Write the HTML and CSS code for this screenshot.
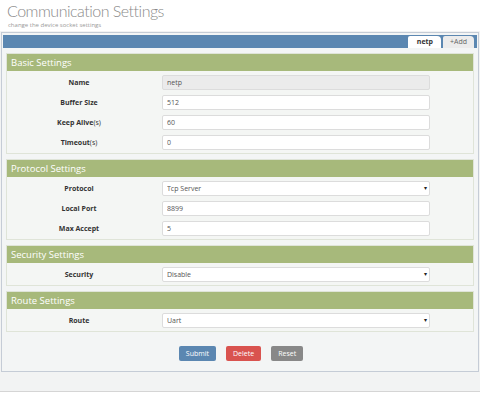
FILE: index.html
```html
<!DOCTYPE html>
<html lang="en">
<head>
  <meta charset="UTF-8">
  <title>Communication Settings</title>
  <link rel="stylesheet" href="styles.css">
</head>
<body>
  <div class="page-head">
    <h1>Communication Settings</h1>
    <p>change the device socket settings</p>
  </div>

  <div class="content">
    <div class="panel">
      <div class="tabbar">
        <span class="tab active">netp</span>
        <span class="tab">+Add</span>
      </div>
      <div class="panel-body">

        <div class="group">
          <div class="group-title">Basic Settings</div>
          <div class="group-body">
            <div class="row"><label><b>Name</b></label><input type="text" value="netp" disabled></div>
            <div class="row"><label><b>Buffer Size</b></label><input type="text" value="512"></div>
            <div class="row"><label><b>Keep Alive</b>(s)</label><input type="text" value="60"></div>
            <div class="row"><label><b>Timeout</b>(s)</label><input type="text" value="0"></div>
          </div>
        </div>

        <div class="group">
          <div class="group-title">Protocol Settings</div>
          <div class="group-body">
            <div class="row"><label><b>Protocol</b></label><div class="select"><select><option>Tcp Server</option></select></div></div>
            <div class="row"><label><b>Local Port</b></label><input type="text" value="8899"></div>
            <div class="row"><label><b>Max Accept</b></label><input type="text" value="5"></div>
          </div>
        </div>

        <div class="group">
          <div class="group-title">Security Settings</div>
          <div class="group-body">
            <div class="row"><label><b>Security</b></label><div class="select"><select><option>Disable</option></select></div></div>
          </div>
        </div>

        <div class="group">
          <div class="group-title">Route Settings</div>
          <div class="group-body">
            <div class="row"><label><b>Route</b></label><div class="select"><select><option>Uart</option></select></div></div>
          </div>
        </div>

        <div class="actions">
          <button class="btn btn-blue">Submit</button>
          <button class="btn btn-red">Delete</button>
          <button class="btn btn-gray">Reset</button>
        </div>
      </div>
    </div>
  </div>
</body>
</html>
```

FILE: styles.css
```css
body {
  margin: 0;
  background: #fff;
  font-family: "Open Sans", "Liberation Sans", sans-serif;
  color: #333;
}
.page-head {
  padding: 0 0 0 7px;
  height: 31px;
}
.page-head h1 {
  margin: 0;
  font-family: Lato, "Liberation Sans", sans-serif;
  font-size: 16px;
  font-weight: 300;
  letter-spacing: -0.5px;
  line-height: 21px;
  color: #8a8a8a;
}
.page-head p {
  margin: 0 0 0 1px;
  font-size: 6px;
  line-height: 8px;
  color: #999;
}
.content {
  background: #f2f3f3;
  height: 361px;
  border-bottom: 1px solid #d5d5d5;
  padding-top: 1px;
  box-sizing: border-box;
}
.panel {
  margin: 0 1px 0 1px;
  border: 1px solid #c5ccd6;
  background: #f3f5f5;
  padding: 2px 1px 0 1px;
  height: 340px;
  box-sizing: border-box;
}
.tabbar {
  background: #5b87b1;
  height: 13px;
  display: flex;
  justify-content: flex-end;
  align-items: flex-end;
  padding-right: 3px;
  gap: 2px;
}
.tab {
  font-size: 7px;
  height: 12px;
  line-height: 12px;
  padding: 0 7px;
  background: #ececec;
  color: #666;
  border-radius: 2px 4px 0 0;
}
.tab.active {
  background: #fff;
  color: #333;
  font-weight: bold;
  padding: 0 8px 0 9px;
}
.panel-body {
  padding: 5px 3px 0 3px;
}
.group {
  border: 1px solid #dfe4d8;
  margin-bottom: 5px;
  background: #f4f6f4;
}
.group-title {
  background: #a7b97b;
  color: #fff;
  font-size: 9.5px;
  height: 17px;
  line-height: 17px;
  padding-left: 4px;
}
.group-body {
  padding: 4px 0 3px 0;
  display: flex;
  flex-direction: column;
  gap: 5px;
}
.row {
  display: grid;
  grid-template-columns: 144px 268px;
  column-gap: 11px;
  align-items: center;
  height: 15px;
}
.row label {
  text-align: center;
  font-size: 7px;
  color: #333;
}
.row input[type="text"], .row select {
  display: block;
  width: 100%;
  height: 15px;
  box-sizing: border-box;
  border: 1px solid #dcdcdc;
  border-radius: 2px;
  background: #fff;
  font-family: inherit;
  font-size: 7px;
  color: #555;
  padding: 0 4px;
  margin: 0;
  outline: none;
}
.row input[disabled] {
  background: #ebebeb;
}
.select {
  position: relative;
  height: 15px;
}
.select select {
  appearance: none;
  -webkit-appearance: none;
}
.select::after {
  content: "▾";
  position: absolute;
  right: 3px;
  top: 3px;
  font-size: 6px;
  line-height: 8px;
  color: #222;
}
.actions {
  display: flex;
  justify-content: center;
  gap: 10px;
  padding-top: 9px;
  padding-left: 2px;
}
.btn {
  border: none;
  border-radius: 2px;
  color: #fff;
  font-family: inherit;
  font-size: 7px;
  height: 15px;
  padding: 0 7px;
}
.btn-blue { background: #5b87b1; }
.btn-red { background: #d9534f; }
.btn-gray { background: #888; }
```
